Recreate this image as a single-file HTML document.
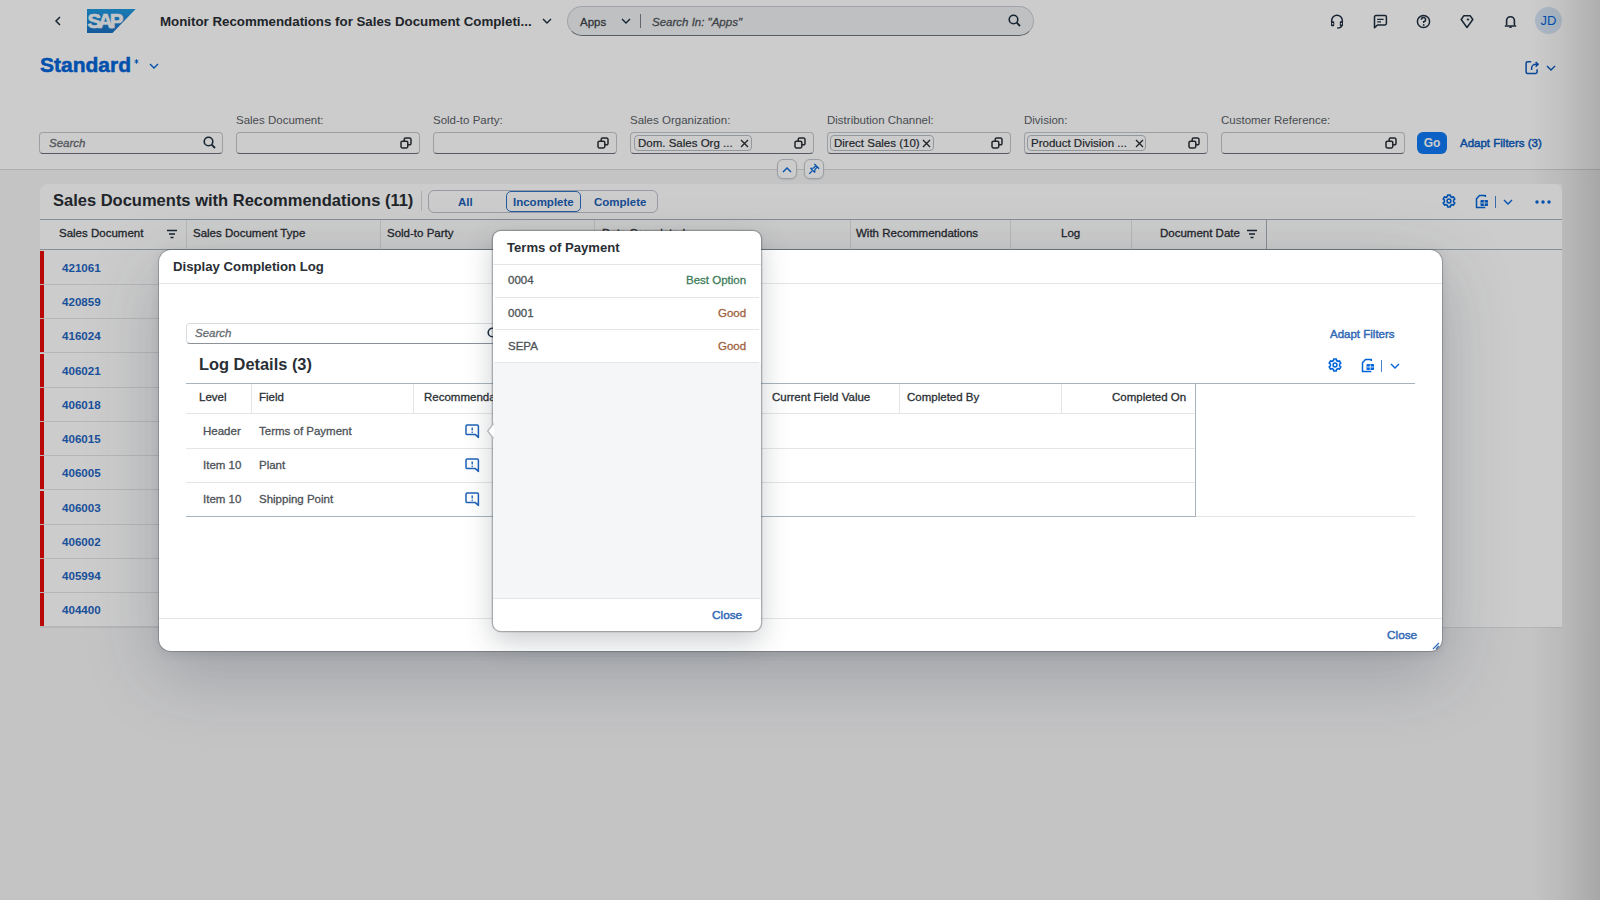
<!DOCTYPE html>
<html><head><meta charset="utf-8">
<style>
*{box-sizing:border-box;margin:0;padding:0}
html,body{width:1600px;height:900px;overflow:hidden}
body{font-family:"Liberation Sans",sans-serif;background:#f5f6f7;color:#2a2f35;position:relative;font-size:11.5px}
.a{position:absolute;white-space:nowrap}
.t{position:absolute;white-space:nowrap;line-height:14px;height:14px;-webkit-text-stroke:0.3px currentColor}
svg{position:absolute;overflow:visible}
.lnk{color:#0064d9}
.sb{font-weight:normal;-webkit-text-stroke:0.45px currentColor}
.shell{position:absolute;left:0;top:0;width:1600px;height:170px;background:#fff;border-bottom:1px solid #d9d9d9}
.fld{position:absolute;top:132px;height:22px;background:#fff;border:1px solid #c4c9ce;border-bottom:1px solid #6a7178;border-radius:4px}
.lbl{position:absolute;top:113px;color:#5b6167;font-size:11.5px;line-height:14px}
.tok{position:absolute;top:2px;height:16px;border:1px solid #b8bec5;border-radius:4px;background:#fff;padding:0 0 0 3px;line-height:14px;font-size:11.5px;color:#2a2f35;-webkit-text-stroke:0.2px currentColor}
.tok svg{top:2.5px}
.card{position:absolute;left:40px;top:184px;width:1522px;height:444px;background:#fff;border-radius:8px 8px 0 0;border-bottom:1px solid #e1e4e7}
.hdr{position:absolute;left:40px;top:219px;width:1522px;height:31px;background:#fff;border-top:1px solid #a8b3bd;border-bottom:1px solid #a8b3bd}
.col{position:absolute;top:0;height:30px;border-right:1px solid #e5e5e5}
.row{position:absolute;left:40px;width:1226px;height:34px;border-bottom:1px solid #e5e5e5;background:#fff}
.row .ind{position:absolute;left:0;top:0;width:4px;height:33px;background:#e90b0b}
.row .num{position:absolute;left:22px;top:9.5px;font-weight:bold;color:#1f66c2;line-height:14px;font-size:11.6px}
.overlay{position:absolute;left:0;top:0;width:1600px;height:900px;background:rgba(0,0,0,0.2)}
</style></head><body>

<!-- SHELL + HEADER -->
<div class="shell"></div>

<!-- back arrow -->
<svg style="left:53px;top:16px" width="10" height="10" viewBox="0 0 10 10"><path d="M7 1 L3 5 L7 9" fill="none" stroke="#1d2d3e" stroke-width="1.5"/></svg>
<!-- SAP logo -->
<svg style="left:87px;top:9px" width="49" height="24" viewBox="0 0 49 24">
 <defs><linearGradient id="sapg" x1="0" y1="0" x2="0" y2="1"><stop offset="0" stop-color="#1f9be2"/><stop offset="1" stop-color="#1b6fc2"/></linearGradient></defs>
 <path d="M0 0 H48.7 L25.5 24 H0 Z" fill="url(#sapg)"/>
 <text x="0.6" y="19" font-family="Liberation Sans" font-weight="bold" font-size="20.5" fill="#f4f6f8" stroke="#f4f6f8" stroke-width="0.7" letter-spacing="-3.2">SAP</text>
</svg>
<div class="t" style="left:160px;top:15px;font-size:13.3px;font-weight:bold;color:#2a2f35;-webkit-text-stroke:0">Monitor Recommendations for Sales Document Completi...</div>
<svg style="left:542px;top:17px" width="10" height="8" viewBox="0 0 10 8"><path d="M1 2 L5 6 L9 2" fill="none" stroke="#1d2d3e" stroke-width="1.4"/></svg>

<!-- search pill -->
<div class="a" style="left:567px;top:6px;width:467px;height:30px;border-radius:15px;background:#eff1f2;border:1px solid #c9ced3;border-bottom:1px solid #6f767d"></div>
<div class="t" style="left:580px;top:15px;color:#3d4349">Apps</div>
<svg style="left:621px;top:17px" width="10" height="8" viewBox="0 0 10 8"><path d="M1 2 L5 6 L9 2" fill="none" stroke="#1d2d3e" stroke-width="1.4"/></svg>
<div class="a" style="left:640px;top:14px;width:1px;height:14px;background:#7a8087"></div>
<div class="t" style="left:652px;top:15px;color:#50565c;font-style:italic">Search In: "Apps"</div>
<svg style="left:1008px;top:14px" width="13" height="13" viewBox="0 0 13 13"><circle cx="5.5" cy="5.5" r="4.3" fill="none" stroke="#1d2d3e" stroke-width="1.6"/><path d="M8.7 8.7 L12 12" stroke="#1d2d3e" stroke-width="1.8"/></svg>

<!-- shell icons -->
<svg style="left:1330px;top:14px" width="14" height="15" viewBox="0 0 14 15"><path d="M1.7 8.5 V6.5 A5.3 5.3 0 0 1 12.3 6.5 V8.5" fill="none" stroke="#1d2d3e" stroke-width="1.5"/><rect x="1" y="7.3" width="3.2" height="5" rx="0.8" fill="#1d2d3e"/><rect x="9.8" y="7.3" width="3.2" height="5" rx="0.8" fill="#1d2d3e"/><rect x="2" y="9" width="1.2" height="1.5" fill="#fff"/><rect x="10.8" y="9" width="1.2" height="1.5" fill="#fff"/><path d="M11.5 12 Q11.3 14 7.2 14" fill="none" stroke="#1d2d3e" stroke-width="1.5"/></svg>
<svg style="left:1373px;top:14px" width="15" height="15" viewBox="0 0 15 15"><path d="M1.5 13.8 V3 Q1.5 1.6 2.9 1.6 H12 Q13.4 1.6 13.4 3 V9.6 Q13.4 11 12 11 H4.5 Z" fill="none" stroke="#1d2d3e" stroke-width="1.5" stroke-linejoin="round"/><path d="M4.2 5.4 H10.6 M4.2 7.8 H8" stroke="#1d2d3e" stroke-width="1.3"/></svg>
<svg style="left:1416px;top:14px" width="15" height="15" viewBox="0 0 15 15"><circle cx="7.5" cy="7.5" r="6.1" fill="none" stroke="#1d2d3e" stroke-width="1.5"/><path d="M5.4 5.8 A2.1 2.1 0 1 1 7.7 7.7 V9" fill="none" stroke="#1d2d3e" stroke-width="1.5"/><circle cx="7.7" cy="10.9" r="0.9" fill="#1d2d3e"/></svg>
<svg style="left:1460px;top:14px" width="14" height="15" viewBox="0 0 14 15"><path d="M3.7 1.8 H10.3 L12.8 5.5 L7 13.5 L1.2 5.5 Z" fill="none" stroke="#1d2d3e" stroke-width="1.5" stroke-linejoin="round"/><path d="M8 3.8 L8.6 5 L9.8 5.5 L8.6 6 L8 7.2 L7.4 6 L6.2 5.5 L7.4 5 Z" fill="#1d2d3e"/></svg>
<svg style="left:1504px;top:15px" width="13" height="14" viewBox="0 0 13 14"><path d="M2.6 10.3 V5.6 A3.9 3.9 0 0 1 10.4 5.6 V10.3" fill="none" stroke="#1d2d3e" stroke-width="1.6"/><path d="M0.8 11 H12.2" stroke="#1d2d3e" stroke-width="1.5"/><path d="M4.9 11.5 A1.6 1.6 0 0 0 8.1 11.5 Z" fill="#1d2d3e"/></svg>
<div class="a" style="left:1535px;top:7px;width:27px;height:27px;border-radius:50%;background:#d8e7f7;color:#0064d9;font-size:13px;line-height:28px;text-align:center">JD</div>

<!-- variant -->
<div class="t" style="left:40px;top:53px;height:24px;line-height:24px;font-size:21px;font-weight:bold;color:#0064d9;-webkit-text-stroke:0.5px #0064d9">Standard</div>
<svg style="left:134px;top:59px" width="5" height="5" viewBox="0 0 5 5"><path d="M2.5 0.3 V4.7 M0.6 1.4 L4.4 3.6 M4.4 1.4 L0.6 3.6" stroke="#0064d9" stroke-width="1"/></svg>
<svg style="left:149px;top:62px" width="10" height="8" viewBox="0 0 10 8"><path d="M1 2 L5 6 L9 2" fill="none" stroke="#0064d9" stroke-width="1.4"/></svg>
<!-- share -->
<svg style="left:1525px;top:60px" width="15" height="15" viewBox="0 0 15 15"><path d="M6.2 1.8 H2.6 A1.5 1.5 0 0 0 1.1 3.3 V11.9 A1.5 1.5 0 0 0 2.6 13.4 H10.6 A1.5 1.5 0 0 0 12.1 11.9 V9.3" fill="none" stroke="#0a58c0" stroke-width="1.5"/><path d="M6.6 10 V8.3 A4 4 0 0 1 10.6 4.3 H12.6" fill="none" stroke="#0a58c0" stroke-width="1.5"/><path d="M10.6 2 L13.2 4.3 L10.6 6.6" fill="none" stroke="#0a58c0" stroke-width="1.5" stroke-linejoin="round"/></svg>
<svg style="left:1546px;top:64px" width="10" height="8" viewBox="0 0 10 8"><path d="M1 2 L5 6 L9 2" fill="none" stroke="#0a58c0" stroke-width="1.4"/></svg>

<!-- filter bar -->
<div class="fld" style="left:39px;width:184px"><div class="t" style="left:9px;top:3px;color:#676c72;font-style:italic">Search</div></div>
<svg style="left:203px;top:136px" width="13" height="13" viewBox="0 0 13 13"><circle cx="5.5" cy="5.5" r="4.3" fill="none" stroke="#1d2d3e" stroke-width="1.6"/><path d="M8.7 8.7 L12 12" stroke="#1d2d3e" stroke-width="1.8"/></svg>

<div class="lbl" style="left:236px">Sales Document:</div>
<div class="fld" style="left:236px;width:184px"></div>
<div class="lbl" style="left:433px">Sold-to Party:</div>
<div class="fld" style="left:433px;width:184px"></div>
<div class="lbl" style="left:630px">Sales Organization:</div>
<div class="fld" style="left:630px;width:184px"><div class="tok" style="left:3px;width:118px">Dom. Sales Org ...<svg style="left:105px" width="9" height="9" viewBox="0 0 9 9"><path d="M1 1 L8 8 M8 1 L1 8" stroke="#2a2f35" stroke-width="1.4"/></svg></div></div>
<div class="lbl" style="left:827px">Distribution Channel:</div>
<div class="fld" style="left:827px;width:184px"><div class="tok" style="left:2px;width:104px">Direct Sales (10)<svg style="left:91px" width="9" height="9" viewBox="0 0 9 9"><path d="M1 1 L8 8 M8 1 L1 8" stroke="#2a2f35" stroke-width="1.4"/></svg></div></div>
<div class="lbl" style="left:1024px">Division:</div>
<div class="fld" style="left:1024px;width:184px"><div class="tok" style="left:2px;width:119px">Product Division ...<svg style="left:107px" width="9" height="9" viewBox="0 0 9 9"><path d="M1 1 L8 8 M8 1 L1 8" stroke="#2a2f35" stroke-width="1.4"/></svg></div></div>
<div class="lbl" style="left:1221px">Customer Reference:</div>
<div class="fld" style="left:1221px;width:184px"></div>
<!-- value help icons -->
<svg style="left:400px;top:137px" width="12" height="12" viewBox="0 0 12 12"><rect x="1" y="4.2" width="6.8" height="6.8" rx="1.4" fill="none" stroke="#2a2f35" stroke-width="1.5"/><path d="M4.2 4 V2.4 A1.4 1.4 0 0 1 5.6 1 H9.6 A1.4 1.4 0 0 1 11 2.4 V6.4 A1.4 1.4 0 0 1 9.6 7.8 H8" fill="none" stroke="#2a2f35" stroke-width="1.5"/></svg>
<svg style="left:597px;top:137px" width="12" height="12" viewBox="0 0 12 12"><rect x="1" y="4.2" width="6.8" height="6.8" rx="1.4" fill="none" stroke="#2a2f35" stroke-width="1.5"/><path d="M4.2 4 V2.4 A1.4 1.4 0 0 1 5.6 1 H9.6 A1.4 1.4 0 0 1 11 2.4 V6.4 A1.4 1.4 0 0 1 9.6 7.8 H8" fill="none" stroke="#2a2f35" stroke-width="1.5"/></svg>
<svg style="left:794px;top:137px" width="12" height="12" viewBox="0 0 12 12"><rect x="1" y="4.2" width="6.8" height="6.8" rx="1.4" fill="none" stroke="#2a2f35" stroke-width="1.5"/><path d="M4.2 4 V2.4 A1.4 1.4 0 0 1 5.6 1 H9.6 A1.4 1.4 0 0 1 11 2.4 V6.4 A1.4 1.4 0 0 1 9.6 7.8 H8" fill="none" stroke="#2a2f35" stroke-width="1.5"/></svg>
<svg style="left:991px;top:137px" width="12" height="12" viewBox="0 0 12 12"><rect x="1" y="4.2" width="6.8" height="6.8" rx="1.4" fill="none" stroke="#2a2f35" stroke-width="1.5"/><path d="M4.2 4 V2.4 A1.4 1.4 0 0 1 5.6 1 H9.6 A1.4 1.4 0 0 1 11 2.4 V6.4 A1.4 1.4 0 0 1 9.6 7.8 H8" fill="none" stroke="#2a2f35" stroke-width="1.5"/></svg>
<svg style="left:1188px;top:137px" width="12" height="12" viewBox="0 0 12 12"><rect x="1" y="4.2" width="6.8" height="6.8" rx="1.4" fill="none" stroke="#2a2f35" stroke-width="1.5"/><path d="M4.2 4 V2.4 A1.4 1.4 0 0 1 5.6 1 H9.6 A1.4 1.4 0 0 1 11 2.4 V6.4 A1.4 1.4 0 0 1 9.6 7.8 H8" fill="none" stroke="#2a2f35" stroke-width="1.5"/></svg>
<svg style="left:1385px;top:137px" width="12" height="12" viewBox="0 0 12 12"><rect x="1" y="4.2" width="6.8" height="6.8" rx="1.4" fill="none" stroke="#2a2f35" stroke-width="1.5"/><path d="M4.2 4 V2.4 A1.4 1.4 0 0 1 5.6 1 H9.6 A1.4 1.4 0 0 1 11 2.4 V6.4 A1.4 1.4 0 0 1 9.6 7.8 H8" fill="none" stroke="#2a2f35" stroke-width="1.5"/></svg>

<div class="a" style="left:1417px;top:132px;width:30px;height:22px;border-radius:6px;background:#0f7af5;color:#fff;font-weight:bold;font-size:12px;line-height:22px;text-align:center">Go</div>
<div class="t sb" style="left:1460px;top:136px;color:#0a5cc0;font-size:11.5px">Adapt Filters (3)</div>

<!-- collapse / pin buttons -->
<div class="a" style="left:777px;top:159px;width:20px;height:20px;border-radius:6px;background:#fff;border:1px solid #c4c9ce;box-shadow:0 1px 2px rgba(0,0,0,0.1)"></div>
<svg style="left:782px;top:166px" width="10" height="7" viewBox="0 0 10 7"><path d="M1 6 L5 2 L9 6" fill="none" stroke="#0064d9" stroke-width="1.4"/></svg>
<div class="a" style="left:804px;top:159px;width:20px;height:20px;border-radius:6px;background:#fff;border:1px solid #c4c9ce;box-shadow:0 1px 2px rgba(0,0,0,0.1)"></div>
<svg style="left:808px;top:163px" width="12" height="12" viewBox="0 0 12 12"><path d="M6.3 0.9 L11.1 5.7" stroke="#0064d9" stroke-width="1.3"/><path d="M8 2.6 L5.6 5 L2.7 5.3 L6.7 9.3 L7 6.4 L9.4 4" fill="none" stroke="#0064d9" stroke-width="1.2" stroke-linejoin="round"/><path d="M4.7 7.3 L1.2 10.8" stroke="#0064d9" stroke-width="1.2"/></svg>

<!-- TABLE CARD -->
<div class="card"></div>

<!-- card title -->
<div class="t" style="left:53px;top:191px;height:18px;line-height:18px;font-size:16.5px;font-weight:bold;color:#2a2f35;-webkit-text-stroke:0">Sales Documents with Recommendations (11)</div>
<div class="a" style="left:421px;top:191px;width:1px;height:20px;background:#d9d9d9"></div>
<div class="a" style="left:428px;top:190px;width:230px;height:23px;border:1px solid #bcc3ca;border-radius:6px;background:#fff"></div>
<div class="t" style="left:458px;top:195px;color:#1d5fb8;font-weight:bold;-webkit-text-stroke:0">All</div>
<div class="a" style="left:506px;top:191px;width:75px;height:21px;border:1px solid #2f72c8;border-radius:5px;background:#fff"></div>
<div class="t" style="left:513px;top:195px;color:#1d5fb8;font-weight:bold;-webkit-text-stroke:0">Incomplete</div>
<div class="t" style="left:594px;top:195px;color:#1d5fb8;font-weight:bold;-webkit-text-stroke:0">Complete</div>
<!-- card toolbar icons -->
<svg style="left:1442px;top:194px" width="14" height="14" viewBox="0 0 14 14"><path d="M5.63 1.06 L8.37 1.06 L8.53 2.56 L10.08 3.45 L11.46 2.84 L12.83 5.22 L11.61 6.10 L11.61 7.90 L12.83 8.78 L11.46 11.16 L10.08 10.55 L8.53 11.44 L8.37 12.94 L5.63 12.94 L5.47 11.44 L3.92 10.55 L2.54 11.16 L1.17 8.78 L2.39 7.90 L2.39 6.10 L1.17 5.22 L2.54 2.84 L3.92 3.45 L5.47 2.56 Z" fill="none" stroke="#0064d9" stroke-width="1.6" stroke-linejoin="round"/><circle cx="7" cy="7" r="1.9" fill="none" stroke="#0064d9" stroke-width="1.5"/></svg>
<svg style="left:1475px;top:194px" width="15" height="15" viewBox="0 0 15 15"><path d="M10.3 3 V1.5 H4.5 L1.5 4.8 V13.5 H10.3" fill="none" stroke="#0064d9" stroke-width="1.5" stroke-linejoin="round"/><rect x="5.5" y="6" width="7.5" height="6" rx="0.8" fill="#0064d9"/><path d="M5.8 9 H12.8 M9.25 6.3 V11.8" stroke="#fff" stroke-width="0.8"/></svg>
<div class="a" style="left:1495px;top:196px;width:1px;height:12px;background:#4a86d0"></div>
<svg style="left:1503px;top:198px" width="10" height="8" viewBox="0 0 10 8"><path d="M1 2 L5 6 L9 2" fill="none" stroke="#0064d9" stroke-width="1.4"/></svg>
<svg style="left:1535px;top:200px" width="16" height="4" viewBox="0 0 16 4"><circle cx="2" cy="2" r="1.7" fill="#0064d9"/><circle cx="8" cy="2" r="1.7" fill="#0064d9"/><circle cx="14" cy="2" r="1.7" fill="#0064d9"/></svg>

<!-- table header -->
<div class="hdr">
 <div class="col" style="left:0;width:147px"></div>
 <div class="col" style="left:147px;width:194px"></div>
 <div class="col" style="left:341px;width:214px"></div>
 <div class="col" style="left:555px;width:256px"></div>
 <div class="col" style="left:811px;width:160px"></div>
 <div class="col" style="left:971px;width:121px"></div>
 <div class="col" style="left:1092px;width:135px;border-right:1px solid #a8b3bd"></div>
</div>
<div class="t" style="left:59px;top:226px;color:#2a2f35">Sales Document</div>
<svg style="left:166px;top:229px" width="12" height="10" viewBox="0 0 12 10"><path d="M1 1.5 H11 M3 5 H9 M4.5 8.5 H7.5" stroke="#1d2d3e" stroke-width="1.3"/></svg>
<div class="t" style="left:193px;top:226px;color:#2a2f35">Sales Document Type</div>
<div class="t" style="left:387px;top:226px;color:#2a2f35">Sold-to Party</div>
<div class="t" style="left:602px;top:226px;color:#2a2f35">Date Completed</div>
<div class="t" style="left:856px;top:226px;color:#2a2f35">With Recommendations</div>
<div class="t" style="left:1061px;top:226px;color:#2a2f35">Log</div>
<div class="t" style="left:1160px;top:226px;color:#2a2f35">Document Date</div>
<svg style="left:1246px;top:229px" width="12" height="10" viewBox="0 0 12 10"><path d="M1 1.5 H11 M3 5 H9 M4.5 8.5 H7.5" stroke="#1d2d3e" stroke-width="1.3"/></svg>

<div class="row" style="top:251px"><div class="ind"></div><div class="num">421061</div></div>
<div class="row" style="top:285px"><div class="ind"></div><div class="num">420859</div></div>
<div class="row" style="top:319px"><div class="ind"></div><div class="num">416024</div></div>
<div class="row" style="top:354px"><div class="ind"></div><div class="num">406021</div></div>
<div class="row" style="top:388px"><div class="ind"></div><div class="num">406018</div></div>
<div class="row" style="top:422px"><div class="ind"></div><div class="num">406015</div></div>
<div class="row" style="top:456px"><div class="ind"></div><div class="num">406005</div></div>
<div class="row" style="top:491px"><div class="ind"></div><div class="num">406003</div></div>
<div class="row" style="top:525px"><div class="ind"></div><div class="num">406002</div></div>
<div class="row" style="top:559px"><div class="ind"></div><div class="num">405994</div></div>
<div class="row" style="top:593px"><div class="ind"></div><div class="num">404400</div></div>
<!-- OVERLAY -->
<div class="overlay"></div>


<!-- DIALOG -->
<div class="a" style="left:159px;top:250px;width:1283px;height:401px;background:#fff;border-radius:12px;box-shadow:0 0 0 1px rgba(60,64,70,0.3),0 22px 70px rgba(40,50,65,0.26),0 3px 10px rgba(40,50,65,0.12)"></div>
<div class="t" style="left:173px;top:260px;font-size:13.2px;font-weight:bold;color:#2a2f35;-webkit-text-stroke:0">Display Completion Log</div>
<div class="a" style="left:159px;top:283px;width:1283px;height:1px;background:#e5e5e5"></div>
<!-- dialog search -->
<div class="a" style="left:186px;top:323px;width:330px;height:21px;border:1px solid #d9dde1;border-bottom:1px solid #8c9299;border-radius:4px;background:#fff"></div>
<div class="t" style="left:195px;top:326px;color:#676c72;font-style:italic">Search</div>
<svg style="left:487px;top:327px" width="13" height="13" viewBox="0 0 13 13"><circle cx="5.5" cy="5.5" r="4.3" fill="none" stroke="#1d2d3e" stroke-width="1.6"/><path d="M8.7 8.7 L12 12" stroke="#1d2d3e" stroke-width="1.8"/></svg>
<div class="t sb" style="left:1330px;top:327px;color:#3169b5;font-size:11.5px">Adapt Filters</div>
<div class="t" style="left:199px;top:355px;height:18px;line-height:18px;font-size:16.4px;font-weight:bold;color:#2a2f35;-webkit-text-stroke:0">Log Details (3)</div>
<svg style="left:1328px;top:358px" width="14" height="14" viewBox="0 0 14 14"><path d="M5.63 1.06 L8.37 1.06 L8.53 2.56 L10.08 3.45 L11.46 2.84 L12.83 5.22 L11.61 6.10 L11.61 7.90 L12.83 8.78 L11.46 11.16 L10.08 10.55 L8.53 11.44 L8.37 12.94 L5.63 12.94 L5.47 11.44 L3.92 10.55 L2.54 11.16 L1.17 8.78 L2.39 7.90 L2.39 6.10 L1.17 5.22 L2.54 2.84 L3.92 3.45 L5.47 2.56 Z" fill="none" stroke="#0064d9" stroke-width="1.6" stroke-linejoin="round"/><circle cx="7" cy="7" r="1.9" fill="none" stroke="#0064d9" stroke-width="1.5"/></svg>
<svg style="left:1361px;top:358px" width="15" height="15" viewBox="0 0 15 15"><path d="M10.3 3 V1.5 H4.5 L1.5 4.8 V13.5 H10.3" fill="none" stroke="#0064d9" stroke-width="1.5" stroke-linejoin="round"/><rect x="5.5" y="6" width="7.5" height="6" rx="0.8" fill="#0064d9"/><path d="M5.8 9 H12.8 M9.25 6.3 V11.8" stroke="#fff" stroke-width="0.8"/></svg>
<div class="a" style="left:1381px;top:360px;width:1px;height:12px;background:#4a86d0"></div>
<svg style="left:1390px;top:362px" width="10" height="8" viewBox="0 0 10 8"><path d="M1 2 L5 6 L9 2" fill="none" stroke="#0064d9" stroke-width="1.4"/></svg>
<!-- log table -->
<div class="a" style="left:186px;top:383px;width:1229px;height:1px;background:#a8b3bd"></div>
<div class="a" style="left:186px;top:413px;width:1010px;height:1px;background:#e5e5e5"></div>
<div class="a" style="left:186px;top:448px;width:1010px;height:1px;background:#e5e5e5"></div>
<div class="a" style="left:186px;top:482px;width:1010px;height:1px;background:#e5e5e5"></div>
<div class="a" style="left:186px;top:516px;width:1229px;height:1px;background:#e5e5e5"></div>
<div class="a" style="left:186px;top:516px;width:1010px;height:1px;background:#a8b3bd"></div>
<div class="a" style="left:1195px;top:384px;width:1px;height:133px;background:#a8b3bd"></div>
<div class="a" style="left:251px;top:384px;width:1px;height:29px;background:#e5e5e5"></div>
<div class="a" style="left:413px;top:384px;width:1px;height:29px;background:#e5e5e5"></div>
<div class="a" style="left:760px;top:384px;width:1px;height:133px;background:#e5e5e5"></div>
<div class="a" style="left:899px;top:384px;width:1px;height:29px;background:#e5e5e5"></div>
<div class="a" style="left:1061px;top:384px;width:1px;height:29px;background:#e5e5e5"></div>
<div class="t" style="left:199px;top:390px;color:#2a2f35">Level</div>
<div class="t" style="left:259px;top:390px;color:#2a2f35">Field</div>
<div class="t" style="left:424px;top:390px;color:#2a2f35">Recommendations</div>
<div class="t" style="left:772px;top:390px;color:#2a2f35">Current Field Value</div>
<div class="t" style="left:907px;top:390px;color:#2a2f35">Completed By</div>
<div class="t" style="left:1112px;top:390px;color:#2a2f35">Completed On</div>
<div class="t" style="left:203px;top:424px;color:#4d5257">Header</div>
<div class="t" style="left:259px;top:424px;color:#4d5257">Terms of Payment</div>
<div class="t" style="left:203px;top:458px;color:#4d5257">Item 10</div>
<div class="t" style="left:259px;top:458px;color:#4d5257">Plant</div>
<div class="t" style="left:203px;top:492px;color:#4d5257">Item 10</div>
<div class="t" style="left:259px;top:492px;color:#4d5257">Shipping Point</div>
<svg style="left:465px;top:424px" width="15" height="15" viewBox="0 0 15 15"><path d="M2.2 1 H12.2 A1.2 1.2 0 0 1 13.4 2.2 V13.4 L10.4 10.6 H2.2 A1.2 1.2 0 0 1 1 9.4 V2.2 A1.2 1.2 0 0 1 2.2 1 Z" fill="none" stroke="#1f62b8" stroke-width="1.5" stroke-linejoin="round"/><path d="M7.2 3.4 V6.6" stroke="#1f62b8" stroke-width="1.4"/><circle cx="7.2" cy="8.3" r="0.8" fill="#1f62b8"/></svg>
<svg style="left:465px;top:458px" width="15" height="15" viewBox="0 0 15 15"><path d="M2.2 1 H12.2 A1.2 1.2 0 0 1 13.4 2.2 V13.4 L10.4 10.6 H2.2 A1.2 1.2 0 0 1 1 9.4 V2.2 A1.2 1.2 0 0 1 2.2 1 Z" fill="none" stroke="#1f62b8" stroke-width="1.5" stroke-linejoin="round"/><path d="M7.2 3.4 V6.6" stroke="#1f62b8" stroke-width="1.4"/><circle cx="7.2" cy="8.3" r="0.8" fill="#1f62b8"/></svg>
<svg style="left:465px;top:492px" width="15" height="15" viewBox="0 0 15 15"><path d="M2.2 1 H12.2 A1.2 1.2 0 0 1 13.4 2.2 V13.4 L10.4 10.6 H2.2 A1.2 1.2 0 0 1 1 9.4 V2.2 A1.2 1.2 0 0 1 2.2 1 Z" fill="none" stroke="#1f62b8" stroke-width="1.5" stroke-linejoin="round"/><path d="M7.2 3.4 V6.6" stroke="#1f62b8" stroke-width="1.4"/><circle cx="7.2" cy="8.3" r="0.8" fill="#1f62b8"/></svg>

<div class="a" style="left:159px;top:618px;width:1283px;height:1px;background:#e5e5e5"></div>
<div class="t sb" style="left:1387px;top:628px;color:#3169b5;font-size:11.8px">Close</div>
<svg style="left:1430px;top:640px" width="10" height="10" viewBox="0 0 10 10"><path d="M9 3 L3 9 M9 6 L6 9" stroke="#3169b5" stroke-width="1.2"/></svg>

<!-- POPOVER -->
<div class="a" style="left:493px;top:231px;width:268px;height:400px;background:#fff;border-radius:8px;box-shadow:0 0 0 1.3px rgba(60,64,70,0.35),0 10px 28px rgba(40,50,60,0.25);overflow:hidden">
 <div class="a" style="left:0;top:131px;width:268px;height:236px;background:#f5f6f7"></div>
</div>
<svg style="left:486px;top:422px" width="9" height="18" viewBox="0 0 9 18"><path d="M8 1 L1.6 9 L8 17 Z" fill="#fff"/><path d="M7.5 1.5 L1.6 9 L7.5 16.5" fill="none" stroke="#b4b8bd" stroke-width="1.3"/></svg>
<div class="t" style="left:507px;top:241px;font-size:13.1px;font-weight:bold;color:#2a2f35;-webkit-text-stroke:0">Terms of Payment</div>
<div class="a" style="left:493px;top:264px;width:268px;height:1px;background:#e5e5e5"></div>
<div class="t" style="left:508px;top:273px;color:#4d5257">0004</div>
<div class="t" style="left:686px;top:273px;color:#3f7d5a">Best Option</div>
<div class="a" style="left:495px;top:297px;width:264px;height:1px;background:#e5e5e5"></div>
<div class="t" style="left:508px;top:306px;color:#4d5257">0001</div>
<div class="t" style="left:718px;top:306px;color:#a0623e">Good</div>
<div class="a" style="left:495px;top:329px;width:264px;height:1px;background:#e5e5e5"></div>
<div class="t" style="left:508px;top:339px;color:#4d5257">SEPA</div>
<div class="t" style="left:718px;top:339px;color:#a0623e">Good</div>
<div class="a" style="left:495px;top:362px;width:264px;height:1px;background:#e5e5e5"></div>
<div class="a" style="left:493px;top:598px;width:268px;height:1px;background:#e5e5e5"></div>
<div class="t sb" style="left:712px;top:608px;color:#3169b5;font-size:11.8px">Close</div>

<!-- right edge shade -->
<div class="a" style="left:1530px;top:0;width:70px;height:184px;background:linear-gradient(to right,rgba(0,0,0,0),rgba(0,0,0,0.05) 45%,rgba(0,0,0,0.15))"></div>
<div class="a" style="left:1530px;top:627px;width:70px;height:273px;background:linear-gradient(to right,rgba(0,0,0,0),rgba(0,0,0,0.05) 45%,rgba(0,0,0,0.15))"></div>
<div class="a" style="left:1562px;top:184px;width:38px;height:443px;background:linear-gradient(to right,rgba(0,0,0,0.05),rgba(0,0,0,0.15))"></div>

</body></html>
